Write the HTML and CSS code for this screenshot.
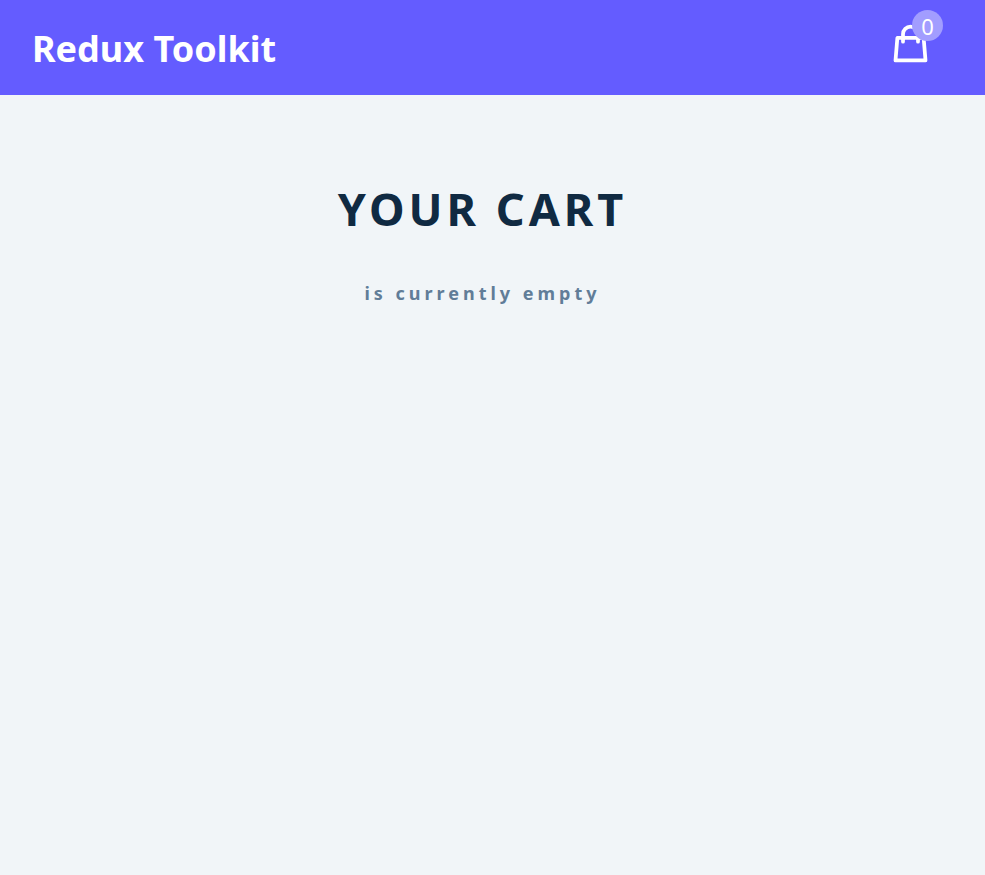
FILE: index.html
```html
<!DOCTYPE html>
<html lang="en">
<head>
<meta charset="utf-8">
<meta name="viewport" content="width=device-width, initial-scale=1">
<title>Redux Toolkit</title>
<link rel="stylesheet" href="styles.css">
</head>
<body>
<nav class="navbar">
  <div class="nav-center">
    <h3 class="nav-title">Redux Toolkit</h3>
    <div class="nav-container">
      <svg class="bag" viewBox="0 0 24 24" fill="none" stroke="currentColor" stroke-width="2" stroke-linecap="round" stroke-linejoin="round" aria-hidden="true">
        <path d="M16 11V7a4 4 0 00-8 0v4M5 9h14l1 12H4L5 9z"/>
      </svg>
      <div class="amount-container"><p class="total-amount">0</p></div>
    </div>
  </div>
</nav>
<main>
  <section class="cart">
    <header>
      <h2 class="cart-title">your cart</h2>
      <h4 class="empty-cart">is currently empty</h4>
    </header>
  </section>
</main>
</body>
</html>
```

FILE: styles.css
```css
* {
  margin: 0;
  padding: 0;
  box-sizing: border-box;
}
body {
  background: #f1f5f8;
  color: #102a42;
  font-family: "Noto Sans", "Open Sans", sans-serif;
}
.navbar {
  background: #645cff;
  padding: 21px 32px;
}
.nav-center {
  display: flex;
  align-items: center;
  justify-content: space-between;
}
.nav-title {
  padding-top: 2px;
  color: #fff;
  font-size: 36px;
  line-height: 48px;
}
.nav-container {
  position: relative;
  margin-right: 20px;
  padding-bottom: 8px;
  color: #fff;
}
.bag {
  display: block;
  width: 45px;
  height: 45px;
}
.amount-container {
  position: absolute;
  top: -11px;
  right: -10px;
  width: 31px;
  height: 31px;
  border-radius: 50%;
  background: #a29dff;
  display: flex;
  align-items: center;
  justify-content: center;
}
.total-amount {
  font-size: 22px;
  line-height: 28px;
}
.cart {
  padding: 80px 20px 40px 0;
  text-align: center;
}
.cart-title {
  font-size: 45px;
  line-height: 68px;
  letter-spacing: 4px;
  text-transform: uppercase;
}
.empty-cart {
  margin-top: 37px;
  color: #617d98;
  font-size: 18px;
  line-height: 26px;
  letter-spacing: 4px;
}
```
